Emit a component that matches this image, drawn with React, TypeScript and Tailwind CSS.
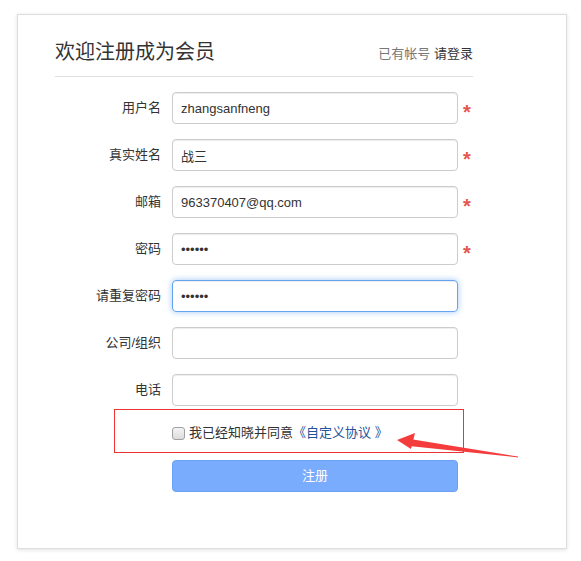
import React from "react";

const rows: { label: string; value?: string; type?: string; required?: boolean; focus?: boolean }[] = [
  { label: "用户名", value: "zhangsanfneng", required: true },
  { label: "真实姓名", value: "战三", required: true },
  { label: "邮箱", value: "963370407@qq.com", required: true },
  { label: "密码", value: "123456", type: "password", required: true },
  { label: "请重复密码", value: "123456", type: "password", focus: true },
  { label: "公司/组织" },
  { label: "电话" },
];

export default function App() {
  return (
    <div className="relative w-[581px] h-[561px] bg-white font-['Liberation_Sans','Noto_Sans_CJK_SC',sans-serif] text-[#333]">
      <div className="absolute left-0 top-0 pt-[14px] pl-[17px]">
        <div className="w-[550px] h-[535px] border border-[#dedede] bg-white shadow-[0_1px_4px_rgba(0,0,0,0.12)] pl-[37px] pt-[23px]">
          <div className="w-[418px] flex items-center justify-between border-b border-[#e0e0e0] pb-[10px]">
            <div className="text-[20px] leading-[28px] text-[#333]">欢迎注册成为会员</div>
            <div className="text-[13px] leading-[18px] mt-[3px]">
              <span className="text-[#777]">已有帐号 </span>
              <span className="text-[#333]">请登录</span>
            </div>
          </div>
          <div className="mt-[15px] flex flex-col gap-[15px]">
            {rows.map((r) => (
              <div key={r.label} className="flex items-center h-[32px]">
                <label className="w-[106px] text-right text-[13px] text-[#333]">{r.label}</label>
                <input
                  readOnly
                  type={r.type || "text"}
                  defaultValue={r.value || ""}
                  className={
                    r.focus
                      ? "ml-[11px] w-[286px] h-[32px] rounded-[4px] border border-[#66a3f0] px-[8px] text-[13px] text-[#333] outline-none shadow-[inset_0_1px_1px_rgba(0,0,0,0.075),0_0_6px_rgba(102,163,240,0.6)] font-['Liberation_Sans','Noto_Sans_CJK_SC',sans-serif]"
                      : "ml-[11px] w-[286px] h-[32px] rounded-[4px] border border-[#ccc] px-[8px] text-[13px] text-[#333] outline-none shadow-[inset_0_1px_1px_rgba(0,0,0,0.075)] font-['Liberation_Sans','Noto_Sans_CJK_SC',sans-serif]"
                  }
                />
                {r.required && (
                  <span className="self-start mt-[10px] ml-[5px] text-[20px] leading-[20px] font-bold text-[#e5574c]">*</span>
                )}
              </div>
            ))}
          </div>
          <div className="mt-[3px] ml-[59px] w-[350px] h-[44px] border border-[#ee3333] flex items-center pt-[4px] pl-[57px]">
            <span className="inline-block w-[13px] h-[13px] rounded-[3px] border border-[#a0a0a0] bg-gradient-to-b from-[#f4f4f4] to-[#dcdcdc]" />
            <span className="ml-[4px] text-[13px] leading-[18px] text-[#333]">
              我已经知晓并同意<span className="text-[#23529a]">《自定义协议 》</span>
            </span>
          </div>
          <div className="mt-[7px] ml-[117px] w-[286px] h-[32px] rounded-[4px] border border-[#6aa0f5] bg-[#7aacfd] flex items-center justify-center text-white text-[13px]">
            注册
          </div>
        </div>
      </div>
      <svg className="absolute left-0 top-0 pointer-events-none" width="581" height="561" viewBox="0 0 581 561">
        <polygon points="397,440 415,433 411,449" fill="#f43c3c" />
        <polygon points="410,439 518,456.6 518,457.4 409,446" fill="#f43c3c" />
      </svg>
    </div>
  );
}
